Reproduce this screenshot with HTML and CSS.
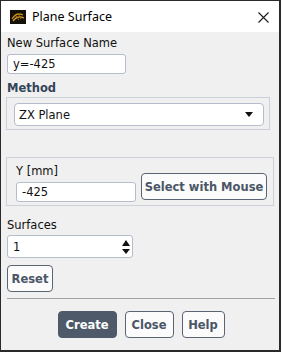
FILE: index.html
```html
<!DOCTYPE html>
<html lang="en">
<head>
  <meta charset="UTF-8" />
  <title>Plane Surface</title>
  <link rel="stylesheet" href="styles.css">
</head>
<body>
  <div class="dialog">
    <div class="titlebar">
      <svg class="app-icon" width="16" height="14" viewBox="0 0 16 14">
        <rect width="16" height="14" fill="#141008"/>
        <path d="M2 9 C5 4, 9 3, 13 5" fill="none" stroke="#c98a1c" stroke-width="1.3"/>
        <path d="M3 11 C6 7, 10 6, 14 8" fill="none" stroke="#e0a52a" stroke-width="1.3"/>
        <path d="M6 6 L9 10 M9 5 L11 9" fill="none" stroke="#a56d12" stroke-width="1"/>
      </svg>
      <span class="title">Plane Surface</span>
      <svg class="close-icon" width="11" height="11" viewBox="0 0 11 11">
        <path d="M0.5 0.5 L10.5 10.5 M10.5 0.5 L0.5 10.5" stroke="#1a1a1a" stroke-width="1.1"/>
      </svg>
    </div>

    <div class="content">
      <div class="field-label">New Surface Name</div>
      <div class="textbox name-box">y=-425</div>

      <div class="section-title">Method</div>
      <div class="group method-group">
        <div class="select">
          <span>ZX Plane</span>
          <span class="caret"></span>
        </div>
      </div>

      <div class="group coord-group">
        <div class="coord-field">
          <div class="field-label">Y [mm]</div>
          <div class="textbox coord-box">-425</div>
        </div>
        <button class="btn mouse-btn">Select with Mouse</button>
      </div>

      <div class="field-label surfaces-label">Surfaces</div>
      <div class="textbox spinner">
        <span>1</span>
        <span class="spin-arrows">
          <span class="arrow-up"></span>
          <span class="arrow-down"></span>
        </span>
      </div>

      <button class="btn reset-btn">Reset</button>

      <div class="separator"></div>

      <div class="actions">
        <button class="btn primary create-btn">Create</button>
        <button class="btn close-btn">Close</button>
        <button class="btn help-btn">Help</button>
      </div>
    </div>
  </div>
</body>
</html>
```

FILE: styles.css
```css
body {
  margin: 0;
  padding: 0;
  background: #ffffff;
  font-family: 'DejaVu Sans', Verdana, sans-serif;
  font-size: 11.5px;
  color: #111;
}

.dialog {
  width: 281px;
  height: 352px;
  box-sizing: border-box;
  border: 1px solid #2a2a2a;
  border-width: 1px 2px 2px 1px;
  background: #f0f0f0;
  display: flex;
  flex-direction: column;
}

.titlebar {
  height: 31px;
  background: #ffffff;
  display: flex;
  align-items: center;
  padding: 0 10px 0 9px;
  flex-shrink: 0;
}

.app-icon {
  margin-right: 6px;
}

.title {
  font-family: 'Noto Sans', 'Open Sans', sans-serif;
  font-size: 12.5px;
  color: #000;
  flex: 1;
}

.close-icon {
  margin-top: 1px;
}

.content {
  padding: 4px 4px 0 6px;
  display: flex;
  flex-direction: column;
  align-items: flex-start;
}

.field-label {
  line-height: 14px;
  color: #111;
}

.textbox {
  box-sizing: border-box;
  height: 20px;
  border: 1px solid #b5bccb;
  border-radius: 3px;
  background: #fff;
  padding: 0 5px;
  display: flex;
  align-items: center;
  line-height: 14px;
}

.name-box {
  width: 119px;
  margin-top: 4px;
}

.section-title {
  font-weight: bold;
  color: #33445a;
  line-height: 14px;
  margin-top: 7px;
}

.group {
  box-sizing: border-box;
  border: 1px solid #cbd0db;
  margin-left: -1px;
}

.method-group {
  width: 264px;
  margin-top: 2px;
  padding: 5px 5px 3px 7px;
}

.select {
  box-sizing: border-box;
  height: 23px;
  border: 1px solid #b5bccb;
  border-radius: 4px;
  background: #fff;
  display: flex;
  align-items: center;
  justify-content: space-between;
  padding: 0 10px 0 4px;
}

.caret {
  width: 0;
  height: 0;
  border-left: 4px solid transparent;
  border-right: 4px solid transparent;
  border-top: 5px solid #111;
}

.coord-group {
  margin-top: 27px;
  width: 268px;
  display: flex;
  align-items: flex-end;
  padding: 6px 5px 3px 9px;
}

.coord-field {
  display: flex;
  flex-direction: column;
  gap: 4px;
}

.coord-box {
  width: 120px;
}

.btn {
  font-family: 'DejaVu Sans', Verdana, sans-serif;
  font-size: 11.5px;
  font-weight: bold;
  color: #4a5566;
  background: #fbfbfb;
  border: 1px solid #5b6472;
  border-radius: 4px;
  height: 27px;
  padding: 0;
  cursor: pointer;
}

.mouse-btn {
  margin-left: 5px;
  margin-bottom: 2px;
  width: 126px;
}

.surfaces-label {
  margin-top: 12px;
}

.spinner {
  width: 126px;
  height: 23px;
  margin-top: 3px;
  justify-content: space-between;
  padding: 0 2px 0 5px;
}

.spin-arrows {
  display: flex;
  flex-direction: column;
  gap: 3px;
}

.arrow-up,
.arrow-down {
  width: 0;
  height: 0;
  border-left: 4px solid transparent;
  border-right: 4px solid transparent;
}

.arrow-up {
  border-bottom: 6px solid #111;
}

.arrow-down {
  border-top: 5px solid #111;
}

.reset-btn {
  margin-top: 7px;
  width: 46px;
}

.separator {
  align-self: stretch;
  height: 1px;
  background: #a3a3a3;
  margin: 6px 0 0 0;
}

.actions {
  align-self: stretch;
  display: flex;
  justify-content: center;
  gap: 8px;
  margin-top: 12px;
}

.create-btn { width: 59px; }
.close-btn { width: 49px; }
.help-btn { width: 43px; }

.btn.primary {
  background: #4e5a69;
  border-color: #4e5a69;
  color: #ffffff;
}
```
